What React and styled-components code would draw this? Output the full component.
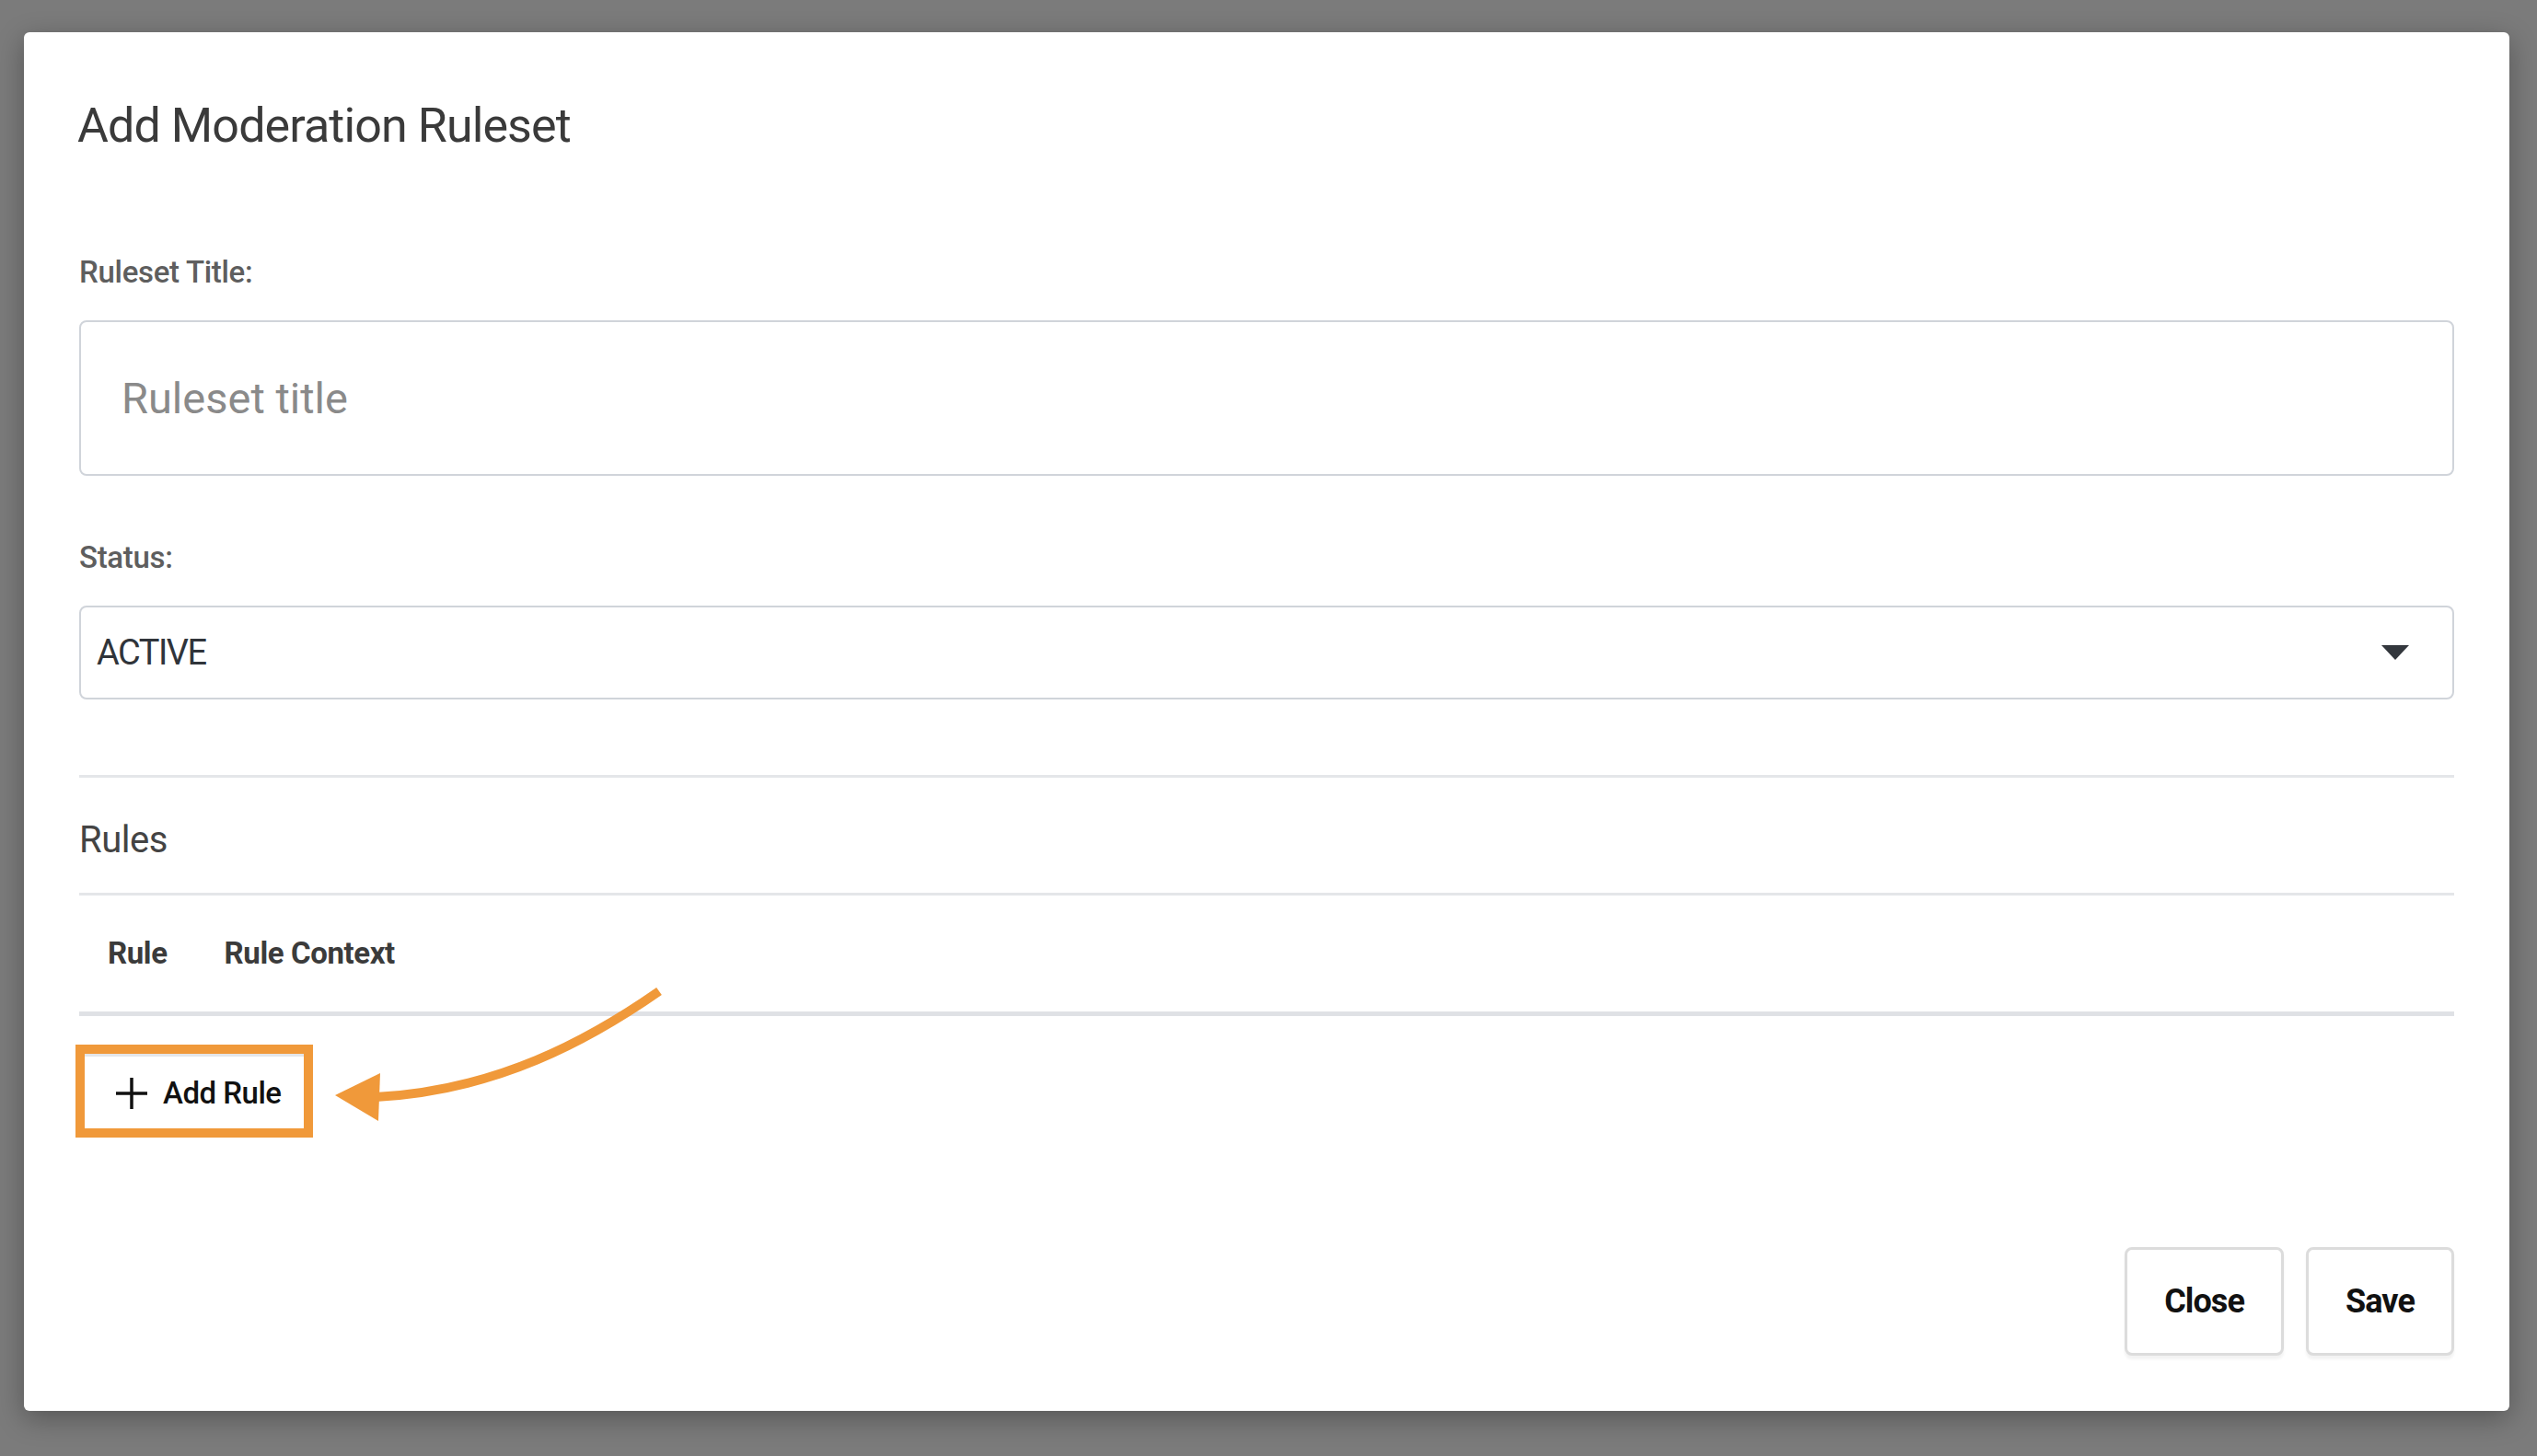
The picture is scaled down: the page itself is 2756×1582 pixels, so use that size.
import React from 'react';
import styled, { createGlobalStyle } from 'styled-components';

const GlobalStyle = createGlobalStyle`
  html, body { margin: 0; padding: 0; background: #7b7b7b; }
  body { font-family: Roboto, "Liberation Sans", sans-serif; }
  * { box-sizing: border-box; }
`;

const Backdrop = styled.div`
  min-height: 100vh;
  padding: 35px 0 0 26px;
`;

const Modal = styled.div`
  width: 2700px;
  padding: 72px 60px 60px;
  background: #fff;
  border-radius: 6px;
  box-shadow: 0 8px 30px rgba(0, 0, 0, 0.3);
`;

const Title = styled.h2`
  margin: 0 0 0 -2px;
  font-size: 52px; font-weight: 400;
  line-height: 60px;
  letter-spacing: -0.9px;
  color: #3a3a3a;
`;

const Label = styled.label`
  display: block;
  margin-top: ${(p) => p.$top}px;
  font-size: 33px; font-weight: 500;
  line-height: 40px;
  letter-spacing: -0.3px;
  color: #5e5e5e;
`;

const TextInput = styled.input`
  display: block;
  width: 100%; height: 169px;
  margin-top: 32px;
  padding: 0 44px;
  border: 2px solid #d0d4da;
  border-radius: 8px;
  font-family: Roboto, "Liberation Sans", sans-serif;
  font-size: 47px;
  color: #333;
  outline: none;

  &::placeholder { color: #8a8a8a; }
`;

const SelectBox = styled.div`
  display: flex; align-items: center; justify-content: space-between;
  height: 102px;
  margin-top: 32px;
  padding: 0 47px 0 17px;
  border: 2px solid #d0d4da;
  border-radius: 8px;
  font-size: 38px;
  letter-spacing: -1.5px;
  color: #30343a;
  cursor: pointer;
`;

const Divider = styled.div`
  height: 3px;
  margin-top: ${(p) => p.$top}px;
  background: #e4e6e9;
`;

const SectionTitle = styled.div`
  margin-top: 44px;
  font-size: 40px;
  line-height: 48px;
  letter-spacing: -0.5px;
  color: #444;
`;

const Table = styled.table`
  width: 100%;
  border-collapse: collapse;
`;

const Th = styled.th`
  padding: 43px 31px;
  border-bottom: 5px solid #dfe1e5;
  text-align: left;
  white-space: nowrap;
  font-size: 33px; font-weight: 700;
  line-height: 40px;
  letter-spacing: -0.4px;
  color: #3b3b3b;

  &:last-child { width: 100%; }
`;

const AddRow = styled.div`
  position: relative;
  margin-top: 31px;
`;

const AddButton = styled.button`
  display: inline-flex; align-items: center;
  gap: 17px;
  height: 101px;
  margin-left: -4px;
  padding: 4px 25px 0 34px;
  border: 10px solid #f0993a;
  background: #fff;
  box-shadow: inset 0 3px 0 #e4e6e9;
  font-family: Roboto, "Liberation Sans", sans-serif;
  font-size: 33px; font-weight: 500;
  letter-spacing: -0.5px;
  color: #111;
  cursor: pointer;
`;

const Pointer = styled.svg`
  position: absolute;
  left: 264px; top: -75px;
  pointer-events: none;
`;

const Footer = styled.div`
  display: flex; justify-content: flex-end;
  gap: 24px;
  margin-top: 119px;
`;

const Button = styled.button`
  height: 118px;
  padding: 0 40px;
  border: 3px solid #dcdcdc;
  border-radius: 8px;
  background: #fff;
  box-shadow: 0 4px 3px rgba(0, 0, 0, 0.05);
  font-family: Roboto, "Liberation Sans", sans-serif;
  font-size: 36px; font-weight: 700;
  letter-spacing: -0.9px;
  color: #111;
  cursor: pointer;
`;

const Caret = () => (
  <svg width="30" height="16" viewBox="0 0 30 16">
    <polygon points="0,0 30,0 15,16" fill="#33373d" />
  </svg>
);

const PlusIcon = () => (
  <svg width="34" height="34" viewBox="0 0 34 34">
    <path d="M17 0V34M0 17H34" stroke="#111" strokeWidth="3.5" fill="none" />
  </svg>
);

const App = () => {
  return (
    <>
      <GlobalStyle />
      <Backdrop>
        <Modal>
          <Title>Add Moderation Ruleset</Title>

          <Label $top={109}>Ruleset Title:</Label>
          <TextInput placeholder="Ruleset title" />

          <Label $top={69}>Status:</Label>
          <SelectBox>
            <span>ACTIVE</span>
            <Caret />
          </SelectBox>

          <Divider $top={82} />
          <SectionTitle>Rules</SectionTitle>
          <Divider $top={33} />

          <Table>
            <thead>
              <tr>
                <Th>Rule</Th>
                <Th>Rule Context</Th>
              </tr>
            </thead>
          </Table>

          <AddRow>
            <AddButton>
              <PlusIcon />
              <span>Add Rule</span>
            </AddButton>
            {/* callout arrow pointing at the button */}
            <Pointer width="380" height="170" viewBox="0 0 380 170">
              <path d="M366 17C290 70 190 125 58 132" stroke="#f0993a" strokeWidth="10" fill="none" />
              <polygon points="14,130 63,106 61,158" fill="#f0993a" />
            </Pointer>
          </AddRow>

          <Footer>
            <Button>Close</Button>
            <Button>Save</Button>
          </Footer>
        </Modal>
      </Backdrop>
    </>
  );
};

export default App;
